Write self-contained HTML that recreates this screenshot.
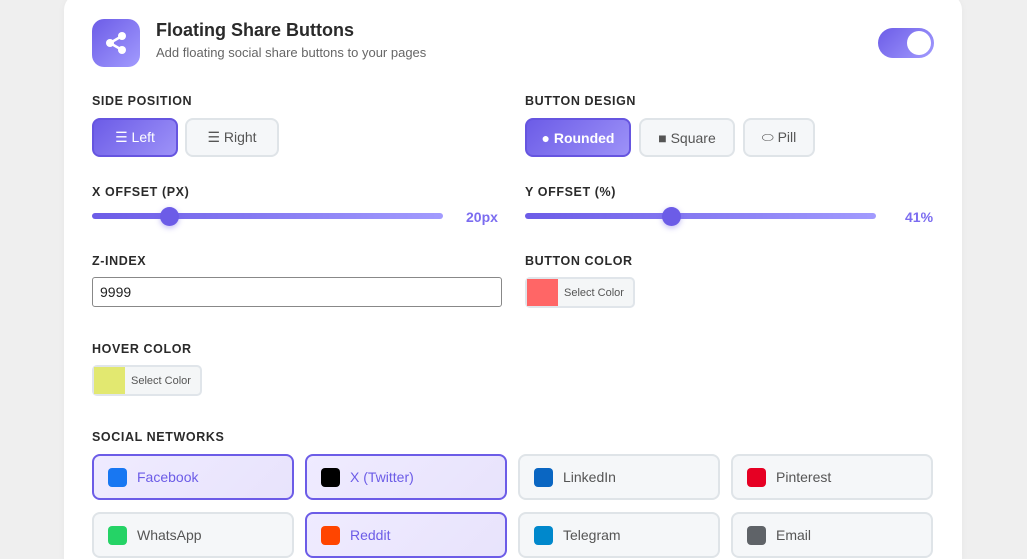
<!DOCTYPE html>
<html><head><style>
*{box-sizing:border-box;margin:0;padding:0}
html,body{width:1027px;height:559px;overflow:hidden}
body{background:#efefef;font-family:"Liberation Sans",sans-serif;position:relative;color:#222}
.card{position:absolute;left:64px;top:-6px;width:898px;height:565px;background:#fff;border-radius:16px 16px 0 0;box-shadow:0 2px 8px rgba(0,0,0,.04)}
.a{position:absolute}
.lbl{position:absolute;font-size:12.5px;font-weight:bold;letter-spacing:.6px;color:#2a2a2a}
.btn{position:absolute;height:39px;border:2px solid #dfe4e8;background:#f5f7f9;border-radius:8px;font-size:14px;color:#555;display:flex;align-items:center;justify-content:center;gap:7px}
.on{background:linear-gradient(135deg,#6c5ce7,#9d92f8);border-color:#6655e0;color:#fff}
.track{position:absolute;height:6px;border-radius:3px;background:linear-gradient(90deg,#6c5ce7,#a29bfe)}
.thumb{position:absolute;width:19px;height:19px;border-radius:50%;background:#6c5ce7;box-shadow:0 2px 6px rgba(108,92,231,.4)}
.val{position:absolute;font-size:14px;font-weight:bold;color:#7b6cf0}
.pick{position:absolute;height:31px;border:2px solid #e0e5ea;border-radius:5px;background:#f4f6f7;font-size:11px;color:#555;display:flex;align-items:center}
.pick i{display:block;width:31px;height:100%;margin-right:6px}
.net{position:absolute;width:202px;height:46px;border:2px solid #dfe4e8;background:#f5f7f9;border-radius:8px;font-size:14px;color:#555;display:flex;align-items:center;padding-left:14px}
.net i{display:block;width:19px;height:19px;border-radius:4px;margin-right:10px}
.net.s{border-color:#6c5ce7;background:linear-gradient(135deg,#efebff,#e8e3fc);color:#6c5ce7}
</style></head><body>
<div class="card"></div>
<div class="a" style="left:92px;top:19px;width:48px;height:48px;border-radius:12px;background:linear-gradient(135deg,#6c5ce7,#a29bfe)">
<svg width="48" height="48" viewBox="0 0 48 48"><g fill="#fff"><circle cx="30" cy="17" r="4"/><circle cx="18" cy="24" r="4"/><circle cx="30" cy="31" r="4"/></g><path d="M30 17L18 24L30 31" stroke="#fff" stroke-width="2.5" fill="none"/></svg></div>
<div class="a" style="left:156px;top:20px;font-size:18px;font-weight:bold;color:#2a2a2a">Floating Share Buttons</div>
<div class="a" style="left:156px;top:45px;font-size:13px;color:#666">Add floating social share buttons to your pages</div>
<div class="a" style="left:878px;top:28px;width:56px;height:30px;border-radius:15px;background:linear-gradient(135deg,#6c5ce7,#a29bfe)"><div class="a" style="right:3px;top:3px;width:24px;height:24px;border-radius:50%;background:#fff"></div></div>

<div class="lbl" style="left:92px;top:94px">SIDE POSITION</div>
<div class="btn on" style="left:92px;top:118px;width:86px">☰ Left</div>
<div class="btn" style="left:185px;top:118px;width:94px">☰ Right</div>
<div class="lbl" style="left:525px;top:94px">BUTTON DESIGN</div>
<div class="btn on" style="left:525px;top:118px;width:106px;font-weight:bold">● Rounded</div>
<div class="btn" style="left:639px;top:118px;width:96px">■ Square</div>
<div class="btn" style="left:743px;top:118px;width:72px">⬭ Pill</div>

<div class="lbl" style="left:92px;top:185px">X OFFSET (PX)</div>
<div class="track" style="left:92px;top:213px;width:351px"></div>
<div class="thumb" style="left:160px;top:207px"></div>
<div class="val" style="left:466px;top:209px">20px</div>
<div class="lbl" style="left:525px;top:185px">Y OFFSET (%)</div>
<div class="track" style="left:525px;top:213px;width:351px"></div>
<div class="thumb" style="left:662px;top:207px"></div>
<div class="val" style="left:905px;top:209px">41%</div>

<div class="lbl" style="left:92px;top:254px">Z-INDEX</div>
<div class="a" style="left:92px;top:277px;width:410px;height:30px;border:1px solid #888;border-radius:3px;font-size:14px;padding:6px 7px;color:#222">9999</div>
<div class="lbl" style="left:525px;top:254px">BUTTON COLOR</div>
<div class="pick" style="left:525px;top:277px;width:110px"><i style="background:#ff6666"></i>Select Color</div>
<div class="lbl" style="left:92px;top:342px">HOVER COLOR</div>
<div class="pick" style="left:92px;top:365px;width:110px"><i style="background:#e2e870"></i>Select Color</div>

<div class="lbl" style="left:92px;top:430px">SOCIAL NETWORKS</div>
<div class="net s" style="left:92px;top:454px"><i style="background:#1877f2"></i>Facebook</div>
<div class="net s" style="left:305px;top:454px"><i style="background:#000"></i>X (Twitter)</div>
<div class="net" style="left:518px;top:454px"><i style="background:#0a66c2"></i>LinkedIn</div>
<div class="net" style="left:731px;top:454px"><i style="background:#e60023"></i>Pinterest</div>
<div class="net" style="left:92px;top:512px"><i style="background:#25d366"></i>WhatsApp</div>
<div class="net s" style="left:305px;top:512px"><i style="background:#ff4500"></i>Reddit</div>
<div class="net" style="left:518px;top:512px"><i style="background:#0088cc"></i>Telegram</div>
<div class="net" style="left:731px;top:512px"><i style="background:#5f6368"></i>Email</div>
</body></html>
